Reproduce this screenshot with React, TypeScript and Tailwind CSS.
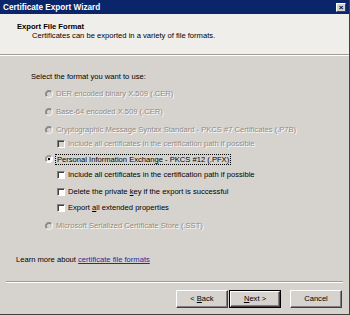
import React from 'react';

const font = { fontFamily: '"Liberation Sans", Arial, sans-serif' };

function Radio({ checked = false, disabled = false }: { checked?: boolean; disabled?: boolean }) {
  return (
    <svg width="8" height="8" viewBox="0 0 12 12" className="shrink-0">
      <circle cx="6" cy="6" r="5.5" fill={disabled ? '#d6d3ce' : '#ffffff'} />
      <path d="M10 2 A5.5 5.5 0 0 0 2 10" fill="none" stroke="#808080" strokeWidth="1.2" />
      <path d="M2 10 A5.5 5.5 0 0 0 10 2" fill="none" stroke="#ffffff" strokeWidth="1.2" />
      <path d="M9 3 A4.2 4.2 0 0 0 3 9" fill="none" stroke="#404040" strokeWidth="1" />
      {checked && <circle cx="6" cy="6" r="1.8" fill="#000" />}
    </svg>
  );
}

function Check({ disabled = false }: { disabled?: boolean }) {
  return (
    <div className="w-[8px] h-[8px] shrink-0 border border-t-[#808080] border-l-[#808080] border-b-white border-r-white">
      <div
        className={`w-full h-full border-t border-l border-t-[#404040] border-l-[#404040] ${
          disabled ? 'bg-[#d6d3ce]' : 'bg-white'
        }`}
      />
    </div>
  );
}

const dis = 'text-[#8f8c86] [text-shadow:1px_1px_0_#ffffff]';

function Btn({ children, def = false }: { children: React.ReactNode; def?: boolean }) {
  return (
    <div
      className={`w-[52px] h-[18px] flex items-center justify-center bg-[#d6d3ce] text-black ${
        def ? 'border border-black' : ''
      }`}
    >
      <div className="w-full h-full flex items-center justify-center border border-t-white border-l-white border-b-[#404040] border-r-[#404040] shadow-[inset_-1px_-1px_0_#808080]">
        {children}
      </div>
    </div>
  );
}

export default function App() {
  return (
    <div
      className="w-[350px] h-[315px] bg-[#d6d3ce] text-[7.6px] leading-[10px] text-black flex flex-col border-r border-b border-r-[#404040] border-b-[#404040]"
      style={font}
    >
      <div className="h-[14px] bg-[#0b256b] flex items-center justify-between pl-[3px] pr-[3px] pt-[1px]">
        <span className="text-white font-bold text-[8.2px]">Certificate Export Wizard</span>
        <div className="w-[10px] h-[9px] bg-[#d6d3ce] flex items-center justify-center border border-t-white border-l-white border-b-[#404040] border-r-[#404040] text-[8px] font-bold leading-none">
          ×
        </div>
      </div>

      <div className="h-[40px] bg-[#efeeea] pl-[17px] pt-[8px]">
        <div className="font-bold leading-[9px]">Export File Format</div>
        <div className="pl-[15px] leading-[9px] mt-[0px]">
          Certificates can be exported in a variety of file formats.
        </div>
      </div>
      <div className="h-[1px] bg-[#a09d96]" />
      <div className="h-[1px] bg-white" />

      <div className="flex flex-col pl-[31px]">
        <div className="h-[12px] flex items-center mt-[15px]">Select the format you want to use:</div>

        <div className="h-[12px] flex items-center mt-[5px] pl-[14px] gap-[3px]">
          <Radio disabled />
          <span className={dis}>DER encoded binary X.509 (.CER)</span>
        </div>
        <div className="h-[12px] flex items-center mt-[6px] pl-[14px] gap-[3px]">
          <Radio disabled />
          <span className={dis}>Base-64 encoded X.509 (.CER)</span>
        </div>
        <div className="h-[12px] flex items-center mt-[6px] pl-[14px] gap-[3px]">
          <Radio disabled />
          <span className={dis}>Cryptographic Message Syntax Standard - PKCS #7 Certificates (.P7B)</span>
        </div>
        <div className="h-[12px] flex items-center mt-[2px] pl-[26px] gap-[3px]">
          <Check disabled />
          <span className={dis}>Include all certificates in the certification path if possible</span>
        </div>

        <div className="h-[12px] flex items-center mt-[3px] pl-[14px] gap-[2px]">
          <Radio checked />
          <span className="border border-dotted border-black px-[1px] leading-[9px]">
            Personal Information Exchange - PKCS #12 (.PFX)
          </span>
        </div>
        <div className="h-[12px] flex items-center mt-[4px] pl-[26px] gap-[3px]">
          <Check />
          <span>
            Include all certificates in the certification path if possible
          </span>
        </div>
        <div className="h-[12px] flex items-center mt-[5px] pl-[26px] gap-[3px]">
          <Check />
          <span>
            Delete the private <span className="underline">k</span>ey if the export is successful
          </span>
        </div>
        <div className="h-[12px] flex items-center mt-[4px] pl-[26px] gap-[3px]">
          <Check />
          <span>
            Export <span className="underline">a</span>ll extended properties
          </span>
        </div>

        <div className="h-[12px] flex items-center mt-[6px] pl-[14px] gap-[3px]">
          <Radio disabled />
          <span className={dis}>Microsoft Serialized Certificate Store (.SST)</span>
        </div>
      </div>

      <div className="h-[12px] flex items-center mt-[22px] pl-[16px]">
        Learn more about&nbsp;<span className="text-[#2a2a9c] underline">certificate file formats</span>
      </div>

      <div className="mt-[15px] mx-[6px]">
        <div className="h-[1px] bg-[#a09d96]" />
        <div className="h-[1px] bg-white" />
      </div>

      <div className="flex justify-end mt-[7px] pr-[7px]">
        <Btn>
          &lt; <span className="underline ml-[2px]">B</span>ack
        </Btn>
        <div className="ml-[1px]">
          <Btn def>
            <span className="underline">N</span>ext &gt;
          </Btn>
        </div>
        <div className="ml-[9px]">
          <Btn>Cancel</Btn>
        </div>
      </div>
    </div>
  );
}
